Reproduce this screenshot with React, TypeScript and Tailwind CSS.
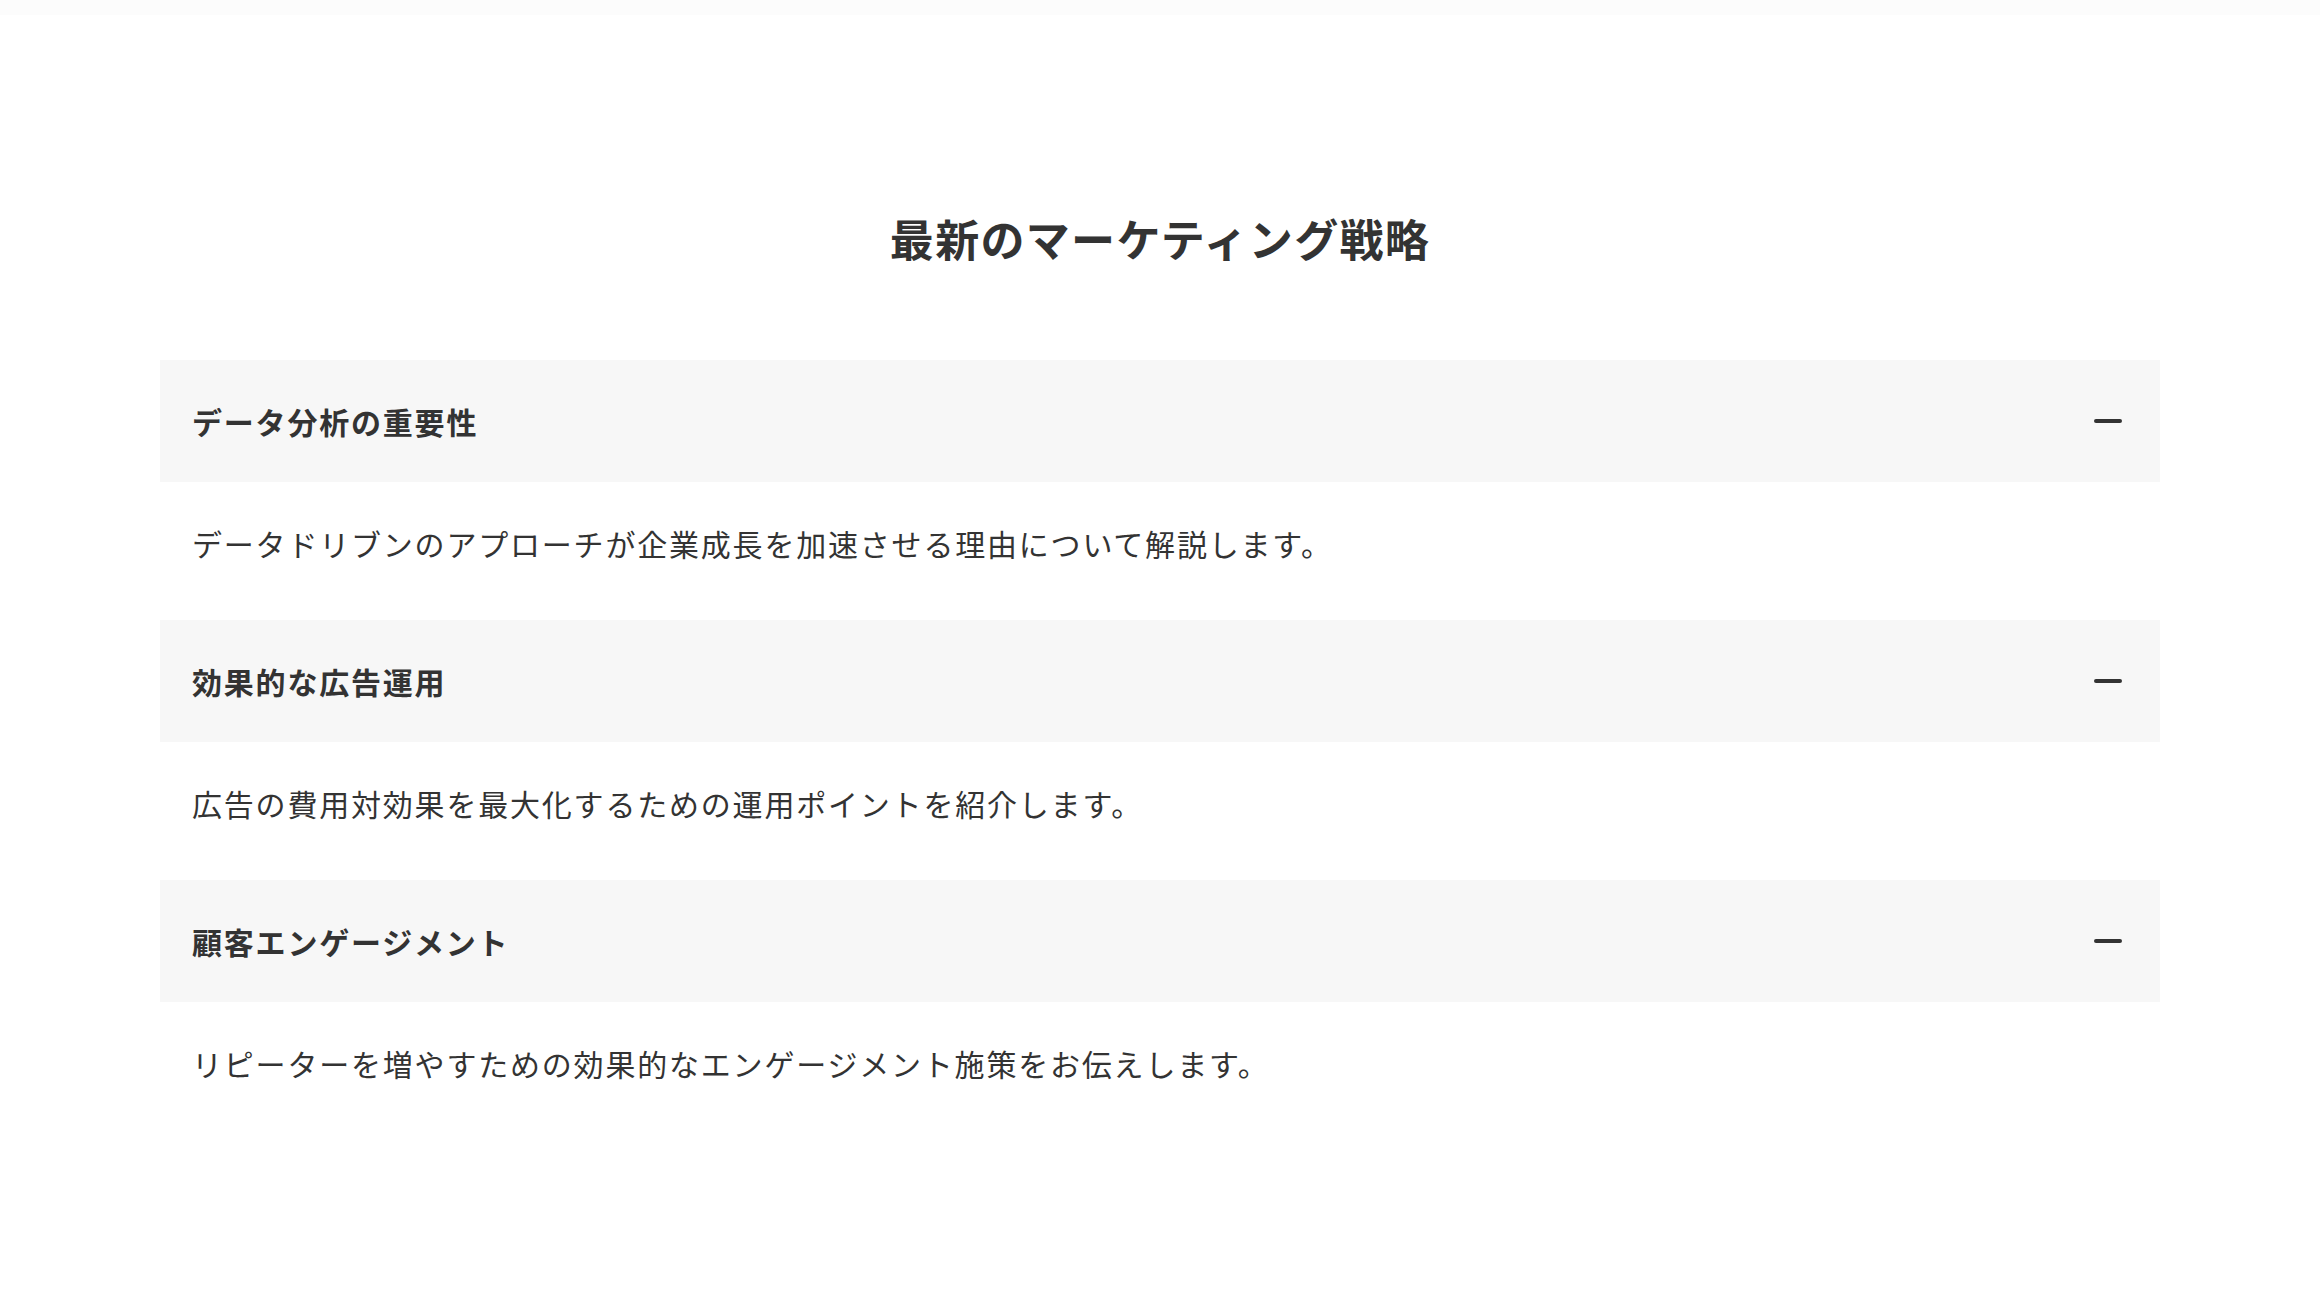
import React, { useState } from 'react';

interface Item {
  title: string;
  body: string;
}

const items: Item[] = [
  {
    title: 'データ分析の重要性',
    body: 'データドリブンのアプローチが企業成長を加速させる理由について解説します。',
  },
  {
    title: '効果的な広告運用',
    body: '広告の費用対効果を最大化するための運用ポイントを紹介します。',
  },
  {
    title: '顧客エンゲージメント',
    body: 'リピーターを増やすための効果的なエンゲージメント施策をお伝えします。',
  },
];

const AccordionItem: React.FC<{ item: Item }> = ({ item }) => {
  const [open, setOpen] = useState(true);

  return (
    <div>
      <button
        onClick={() => setOpen(!open)}
        className="w-full flex items-center justify-between bg-[#f7f7f7] pl-8 pr-[38px] py-[39px] text-left"
      >
        <span className="text-[30px] leading-[44px] font-bold tracking-[0.06em] text-[#333]">
          {item.title}
        </span>
        <span className="relative w-[28px] h-[28px] flex items-center justify-center">
          <span className="w-[28px] h-[4px] rounded-full bg-[#333]"></span>
          {!open && (
            <span className="absolute w-[4px] h-[28px] rounded-full bg-[#333]"></span>
          )}
        </span>
      </button>
      {open && (
        <div className="pl-8 pr-8 pt-[35px] pb-[51px]">
          <p className="text-[30px] leading-[52px] tracking-[0.06em] text-[#333]">{item.body}</p>
        </div>
      )}
    </div>
  );
};

export default function App() {
  return (
    <div
      className="min-h-screen bg-white antialiased"
      style={{ fontFamily: '"Noto Sans CJK JP", "Noto Sans", sans-serif' }}
    >
      <div className="h-[15px] bg-[#fcfcfc]"></div>
      <main className="w-[2000px] mx-auto pt-[190px] pb-[120px]">
        <h1 className="text-center text-[44px] leading-[66px] font-bold tracking-[0.03em] text-[#333] mb-[89px]">
          最新のマーケティング戦略
        </h1>
        <div className="flex flex-col">
          {items.map((item) => (
            <AccordionItem key={item.title} item={item} />
          ))}
        </div>
      </main>
    </div>
  );
}
